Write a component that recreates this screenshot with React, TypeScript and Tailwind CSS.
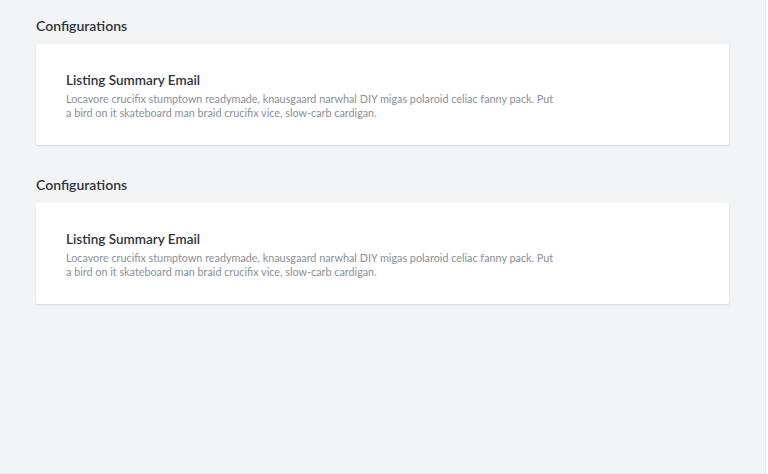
const sections = [
  {
    heading: "Configurations",
    title: "Listing Summary Email",
    body: "Locavore crucifix stumptown readymade, knausgaard narwhal DIY migas polaroid celiac fanny pack. Put a bird on it skateboard man braid crucifix vice, slow-carb cardigan.",
  },
  {
    heading: "Configurations",
    title: "Listing Summary Email",
    body: "Locavore crucifix stumptown readymade, knausgaard narwhal DIY migas polaroid celiac fanny pack. Put a bird on it skateboard man braid crucifix vice, slow-carb cardigan.",
  },
];

export default function App() {
  return (
    <div className="h-[474px] w-[766px] overflow-hidden border-r border-b border-[#e5e7eb] bg-[#f3f4f6] font-['Lato',sans-serif]">
      <div className="flex flex-col gap-[31px] px-9 pt-[17px]">
        {sections.map((s, i) => (
          <section key={i}>
            <h2 className="text-[14px] leading-[18px] font-semibold text-[#2d3340]">{s.heading}</h2>
            <div className="mt-[9px] h-[101px] w-[693px] rounded-[2px] bg-white px-[30px] pt-[27px] shadow-[0_1px_2px_rgba(0,0,0,0.12)]">
              <h3 className="text-[13.5px] leading-[18px] font-semibold text-[#2d3340]">{s.title}</h3>
              <p className="mt-[3px] max-w-[493px] text-[10.8px] leading-[14px] text-[#8a8f99]">{s.body}</p>
            </div>
          </section>
        ))}
      </div>
    </div>
  );
}
